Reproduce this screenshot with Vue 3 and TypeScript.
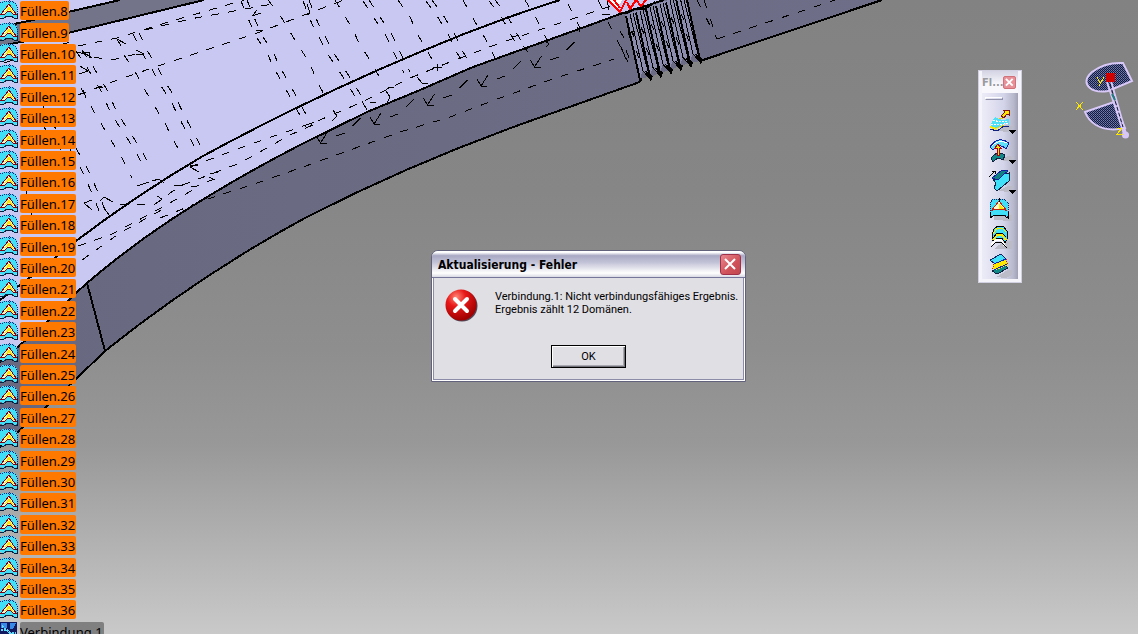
<script setup lang="ts">
import { ref } from 'vue'

const items = Array.from({ length: 29 }, (_, i) => `Füllen.${i + 8}`)
const dialogOpen = ref(true)
const toolbarOpen = ref(true)

// hidden edges that run down-right across the top face; pairs are drawn twice
const pairs = [
  'M82 50L94 68L107 90L115 108L123 122L133 137L143 153L152 170',
  'M139 33L148 52L158 68L167 85L177 100L185 117L195 135L204 153',
  'M247 0L256 22L263 37L272 50L280 67L290 85L300 103L312 126',
  'M309 0L318 23L327 40L335 55L345 70L355 85L366 105',
  'M369 0L382 20L392 35L400 52L410 72',
  'M432 0L445 18L455 35L462 50L472 67',
  'M495 0L507 15L515 30L526 50',
  'M76 148L88 170L98 192L107 215'
]
const singles = [
  'M81 88L93 110L102 125L112 142L122 158L132 178',
  'M124 55L137 75L145 90L155 107L165 123L173 140L184 158',
  'M268 0L280 15L290 32L300 48L309 62L318 83L328 102',
  'M335 0L352 28L360 45L370 60L381 80',
  'M398 0L410 17L418 35L428 52L438 70',
  'M463 0L475 22L485 38L496 60',
  'M525 0L537 20L548 42',
  'M568 4L581 30',
  'M704 0L717 39',
  'M697 0L717 39',
  'M608 22L628 62',
  'M4 63L76 40M20 95L76 170M42 104L62 140M26 190L34 226L76 250'
]
const shallow = [
  'M78 46L117 38L165 23L210 10L244 0',
  'M145 30L190 19L240 10L272 4',
  'M78 95L115 81L155 67L200 52L260 32L312 12L344 0',
  'M190 167L240 148L280 134L315 122L360 103L410 78L450 62L500 43L560 23L614 5',
  'M120 205L155 204L180 186L240 163L290 135L315 124',
  'M78 246L110 235L150 214L200 186',
  'M82 260L120 233L165 208',
  'M160 218L205 200L260 182L303 167L350 150L400 132L450 117L500 98L550 80L614 59',
  'M717 39L835 0',
  'M78 52L92 57L112 60L140 53',
  'M174 185L195 187L214 179'
]
const hooks = [0, 1, 2, 3, 4].map((n) => ({ x: 374 + (n - 1) * 53.5, y: 124 - (n - 1) * 19 }))
const threads = [0, 1, 2, 3, 4, 5, 6]
const tools = ['surface', 'offset', 'sweep', 'fill', 'loft', 'blend']
</script>

<template>
  <main class="viewport">
    <svg class="model" viewBox="0 0 1138 634" aria-hidden="true">
      <defs>
        <linearGradient id="face" x1="0" x2="1">
          <stop offset="0" stop-color="#686880" />
          <stop offset="1" stop-color="#6e6e88" />
        </linearGradient>
      </defs>
      <path
        fill="url(#face)"
        d="M0 362V447L20 430L45 408L76 379L105 351Q200 275 305 218Q412 163 530 121L620 89L637 83Q641 82 641 78L650 77L660 73L670 70L680 66L690 63L700 61L882 0H0Z"
      />
      <path
        fill="#c8c8f2"
        d="M0 0H664L620 14L590 25L540 43L473 67L420 90L367 112L300 145Q232 180 172 219Q128 248 87 283L76 293L47 322L20 345L0 362Z"
      />
      <path fill="#737389" d="M0 27L120 0H204L68 33L0 46Z" />
      <g class="edges">
        <path d="M0 27L33 20L68 12L120 0M0 46L68 33L204 0" />
        <path d="M0 300L40 270L76 241Q138 194 203 156Q310 98 420 52Q490 22 560 0" />
        <path d="M0 362L20 345L47 322L76 293L87 283Q128 248 172 219Q232 180 300 145L367 112L420 90L473 67L540 43L590 25L620 14L664 0" />
        <path d="M0 447L20 430L45 408L76 379L105 351Q200 275 305 218Q412 163 530 121L620 89L637 83Q641 82 641 78M700 61L882 0M87 283L105 351" />
      </g>
      <g class="hidden-edges steep">
        <template v-for="d in pairs" :key="d">
          <path :d="d" />
          <path :d="d" transform="translate(-6 1)" />
        </template>
        <path v-for="d in singles" :key="d" :d="d" />
      </g>
      <g class="hidden-edges">
        <path v-for="d in shallow" :key="d" :d="d" />
      </g>
      <g class="marks">
        <path
          v-for="h in hooks"
          :key="h.x"
          :d="`M${h.x - 4} ${h.y - 7}l4 7l7 -11m-7 11h6m10 -7l8 -3m8 -7l8 -8`"
        />
        <path d="M117 39l4 7m-4 -7l9 5M82 52l7 0l1 6m-7 -6l9 6M136 50l8 4l-8 1M80 66l8 5l-9 3M80 94l6 -2m-3 -2l3 8M96 87l7 0M253 15l4 -5m-5 6l9 -3M256 31l7 -1M307 15l3 -2l-3 -9" />
        <path d="M137 186l12 -4M152 181l7 -2l5 4M157 196l5 3l-5 4M84 203l8 -3m-8 3l8 7M100 201l4 -4l9 5M103 207l7 9M209 177l6 3m-5 -6l8 -2M190 167l9 5m-9 -6l8 -1" />
        <path d="M333 110l4 6l-5 5M307 125l7 -3M362 101l5 9m3 -8h6M386 90l4 -3h4m-8 4l4 6l-3 6M417 77l5 6h6M437 64v7m-4 -4h9M513 37l6 -2M523 46l5 6M544 40l5 4l-3 3M577 27l3 5M598 0l4 8m5 -8l2 10m-7 4h8" />
      </g>
      <g v-for="n in threads" :key="n" :transform="`translate(${n * 10} ${n * -3.4})`">
        <path v-if="n < 6" class="thread-face" d="M625 15l15 63l3 -7l8 8l-16 -68Z" />
        <path class="thread-line" d="M626 16l14 64" />
        <path v-if="n < 6" class="thread-fine" d="M630 14l13 57M633 13l17 66M643 71l7 8" />
        <path v-if="n < 6" d="M645 71L648 72L653 76L651 82Z" />
        <path v-if="n < 6" class="thread-mark" d="M631 31l3 6m2 14l3 7" />
      </g>
      <path class="marks" d="M620 31l4 7M628 31l2 7M632 31l4 7M621 47l5 12M626 50l3 8" />
      <path fill="#fff" d="M606 0H622L617 9Z" />
      <path class="red" d="M608 0L620 12L626 0M614 0L620 8M627 2L630 9L636 0L641 6L646 0M611 4L616 7" />
      <path class="edges" d="M618 14L627 13L634 9L645 9L655 2" />
    </svg>

    <ul class="tree">
      <li v-for="item in items" :key="item" class="node">
        <svg class="node-icon" viewBox="0 0 18 20" aria-hidden="true">
          <path fill="#40e0f8" d="M0 3L3 1H13L17 5V17L14 18L9 16L3 18L0 17Z" />
          <path fill="none" stroke="#102078" stroke-dasharray="1 1" d="M0 2H3L5 1H12L15 3L17 6V12M9 0V5" />
          <path fill="#fff8c8" stroke="#800010" d="M9 4L16 14H13Q9 9 5 14H1Z" />
          <path fill="#ffe800" d="M9 6L14 13L9 10L5 12Z" />
          <path fill="none" stroke="#002040" d="M0 18L4 18L7 16H11L14 18H17V13" />
        </svg>
        <span class="label">{{ item }}</span>
      </li>
      <li class="node">
        <svg class="node-icon" viewBox="0 0 18 20" aria-hidden="true">
          <path fill="#101860" d="M0 1H17V20H0Z" />
          <path fill="#3888e8" d="M1 2H7V7H1ZM10 2H16L13 8H10Z" />
          <path stroke="#60d8f8" stroke-width="2" stroke-dasharray="2 1" d="M1 9H8M9 12H16M2 5L14 15" />
          <path fill="#ffe800" d="M1 13H5V16H1Z" />
        </svg>
        <span class="label joined">Verbindung.1</span>
      </li>
    </ul>

    <svg class="compass" viewBox="0 0 73 100" role="img" aria-label="X Y Z">
      <defs>
        <pattern id="mesh" width="2" height="2" patternUnits="userSpaceOnUse">
          <rect width="2" height="2" fill="#101848" />
          <rect width="1" height="1" fill="#7880a8" />
          <rect x="1" y="1" width="1" height="1" fill="#606890" />
        </pattern>
      </defs>
      <g fill="url(#mesh)" stroke="#d8c8f8" stroke-width="2">
        <path d="M58 13Q40 12 27 22Q17 31 25 38Q31 43 43 41L67 31Z" />
        <path d="M20 62L49 52L60 78Q43 82 31 75Q23 70 20 62Z" />
      </g>
      <path fill="none" stroke="#d8c8f8" stroke-width="2" d="M42 32L59 84M46 31L61 84" />
      <path stroke="#101838" stroke-dasharray="4 2" d="M45 34L58 77" />
      <path stroke="#208080" stroke-width="2" d="M47 44L50 50" />
      <circle cx="60.500" cy="85" r="3.500" fill="#d8c8f8" />
      <path fill="#d00000" d="M41 23H50V32H41Z" />
      <path class="axes" d="M32 27L35 33M39 27L34 36M11 52L18 60M18 52L11 60M52 78H57L52 84H58" />
    </svg>

    <section v-if="toolbarOpen" class="toolbar" aria-label="Flächen">
      <header class="toolbar-title">
        <span>Fl...</span>
        <button class="toolbar-close" aria-label="Schließen" @click="toolbarOpen = false">
          <svg viewBox="0 0 11 11"><path d="M2 2L9 9M9 2L2 9" stroke="#fff" stroke-width="2" /></svg>
        </button>
      </header>
      <div class="toolbar-body">
        <i class="grip"></i>
        <button v-for="t in tools" :key="t" class="tool" :class="t" :aria-label="t">
          <svg viewBox="0 0 28 28">
            <g v-if="t === 'surface'">
              <path class="shade" d="M8 25L18 19L26 20L21 26Z" />
              <path fill="#50e0f8" d="M4 16L7 11L14 14L21 13V19L17 17L9 22L2 21Z" />
              <path fill="none" stroke="#fff" stroke-dasharray="2 1" d="M5 14L12 16L20 15M3 18L12 19L20 17" />
              <path fill="none" stroke="#ffe800" stroke-width="2" d="M2 21L9 23" />
              <path fill="none" stroke="#e8d800" d="M9 22L16 19M11 13L15 12L17 9" />
              <path fill="none" stroke="#102080" d="M2 23L9 25L16 20L21 20" />
              <path fill="#ffe800" stroke="#801010" d="M15 4H21V9L19 8L16 12L13 10L17 6Z" />
            </g>
            <g v-else-if="t === 'offset'">
              <path class="shade" d="M12 24L20 20L26 21L24 26Z" />
              <path fill="#60e0f8" stroke="#1020a0" d="M2 11Q10 -1 21 7L18 13Q11 6 5 14Z" />
              <path fill="none" stroke="#fff" d="M4 10Q11 3 19 7" />
              <path fill="#108888" stroke="#102040" d="M3 22Q9 14 17 19L15 24Q10 20 5 26Z" />
              <path fill="#ffe800" stroke="#b00010" d="M9 19V12H7L10 8L13 12H11V19Z" />
            </g>
            <g v-else-if="t === 'sweep'">
              <path class="shade" d="M10 25L20 20H26L22 26Z" />
              <path fill="#40e0f8" stroke="#102040" d="M5 13L10 14L15 8L21 7V15L9 25L6 22L8 17Z" />
              <path fill="#108080" stroke="#1020a0" d="M4 12L14 4L20 5L15 9L10 14Z" />
              <path fill="none" stroke="#000" d="M1 11L6 6M4 5H7V8" />
            </g>
            <g v-else-if="t === 'fill'">
              <path class="shade" d="M6 25V20H24V26Z" />
              <path fill="#40e0f8" stroke="#102060" stroke-dasharray="1 1" d="M2 8L5 4H16L20 8V22L15 20H7L2 22Z" />
              <path fill="#fff8d0" stroke="#c02010" d="M11 6L19 16L15 14H7L3 16Z" />
              <path fill="#ffe800" d="M11 8L16 14H11Z" />
              <path fill="none" stroke="#000" d="M2 17V23L7 20H15L20 23V17M11 3V7" />
            </g>
            <g v-else-if="t === 'loft'">
              <path class="shade" d="M6 26L16 18H24V26Z" />
              <path fill="#40e0f8" stroke="#000" d="M4 13L6 6L10 3H15L19 8L20 14L17 20L14 15H10L5 18Z" />
              <path fill="none" stroke="#ffe800" d="M5 11L9 5H14L18 9" />
              <path fill="none" stroke="#ffe800" stroke-width="2" d="M5 17L9 12H14L18 17" />
              <path fill="none" stroke="#fff" stroke-width="2" d="M3 22L8 17H13L17 23" />
              <path fill="none" stroke="#000" d="M3 24L8 19L14 20L19 25M5 15L9 10H14L18 14" />
            </g>
            <g v-else>
              <path class="shade" d="M8 26L20 19H24V24L18 27Z" />
              <path fill="#40e0f8" stroke="#102060" d="M2 9L13 3L18 8L7 13Z" />
              <path fill="#108888" stroke="#102040" d="M4 20L17 14L20 17L9 23Z" />
              <path fill="#ffe800" d="M6 13L18 8L20 14L8 19L4 18Z" />
              <path fill="none" stroke="#c02010" stroke-dasharray="1 1" d="M6 13L4 19M18 8L20 14" />
              <path fill="none" stroke="#1020c0" d="M6 13L18 8M6 19L19 13" />
            </g>
            <path v-if="t === 'surface' || t === 'offset' || t === 'sweep'" d="M21 24H28L24.500 28Z" />
          </svg>
        </button>
      </div>
    </section>

    <section v-if="dialogOpen" class="dialog" role="alertdialog" aria-labelledby="title" aria-describedby="message">
      <header class="titlebar">
        <h1 id="title">Aktualisierung - Fehler</h1>
        <button class="close" aria-label="Schließen" @click="dialogOpen = false">
          <svg viewBox="0 0 19 19"><path d="M4 4L14 14M14 4L4 14" stroke="#fff" stroke-width="2" /></svg>
        </button>
      </header>
      <div class="content">
        <svg class="error" viewBox="0 0 34 34" aria-hidden="true">
          <defs>
            <radialGradient id="ball" cx="0.350" cy="0.250" r="0.750">
              <stop offset="0" stop-color="#ff8878" />
              <stop offset="0.400" stop-color="#e81818" />
              <stop offset="1" stop-color="#a00000" />
            </radialGradient>
          </defs>
          <circle cx="17" cy="17" r="15.500" fill="#504858" />
          <circle cx="16" cy="16" r="15.500" fill="url(#ball)" />
          <path d="M10 10L22 22M22 10L10 22" stroke="#fff" stroke-width="4" stroke-linecap="round" />
        </svg>
        <p id="message">Verbindung.1: Nicht verbindungsfähiges Ergebnis.<br />Ergebnis zählt 12 Domänen.</p>
      </div>
      <button class="ok" @click="dialogOpen = false">OK</button>
    </section>
  </main>
</template>

<style>
body {
  margin: 0;
}
</style>

<style scoped>
.viewport {
  position: relative;
  height: 100vh;
  overflow: hidden;
  background: linear-gradient(#828282 0%, #868686 30%, #8e8e8e 55%, #989898 70%, #c9c9c9 100%);
  font-family: "Noto Sans", "DejaVu Sans Condensed", sans-serif;
  color: #000;
}
button {
  padding: 0;
  font-family: inherit;
  cursor: pointer;
}
svg {
  display: block;
}
.model {
  position: absolute;
  left: 0;
  top: 0;
  width: 100%;
  shape-rendering: crispEdges;
}
.edges {
  fill: none;
  stroke: #000;
  stroke-width: 2;
}
.hidden-edges {
  fill: none;
  stroke: #000;
  stroke-dasharray: 8 9;
}
.steep {
  stroke-dasharray: 8 12;
}
.marks {
  fill: none;
  stroke: #000;
}
.thread-face {
  fill: #8c8cae;
}
.thread-line {
  fill: none;
  stroke: #000;
  stroke-width: 2;
}
.thread-fine,
.thread-mark {
  fill: none;
  stroke: #000;
}
.red {
  fill: none;
  stroke: #f00;
  stroke-width: 2;
}
.tree {
  position: relative;
  margin: 0;
  padding: 0;
  list-style: none;
}
.node {
  display: flex;
  gap: 2px;
  height: 21px;
}
.node:nth-child(5n + 1),
.node:nth-child(5n + 4) {
  margin-bottom: 1px;
}
.node-icon {
  width: 18px;
  height: 20px;
  shape-rendering: crispEdges;
}
.label {
  height: 19px;
  margin-top: 1px;
  padding: 0 1px 0 0;
  border-radius: 2px;
  background: #ff7800;
  font-size: 13px;
  line-height: 20px;
  white-space: nowrap;
}
.joined {
  background: #808080;
}
.compass {
  position: absolute;
  right: 0;
  top: 50px;
  width: 73px;
  height: 100px;
}
.axes {
  fill: none;
  stroke: #ffe800;
  shape-rendering: crispEdges;
}
.toolbar {
  position: absolute;
  right: 116px;
  top: 70px;
  width: 44px;
  box-sizing: border-box;
  padding: 0 3px 3px;
  border: 1px solid #d0d0e0;
  background: #f4f4fa;
}
.toolbar-title {
  display: flex;
  align-items: center;
  justify-content: space-between;
  height: 22px;
  padding: 0 2px 0 0;
  background: linear-gradient(#d4d4e4, #f8f8fc 60%);
  color: #9a9aa0;
  font-family: "DejaVu Sans Condensed", sans-serif;
  font-size: 11px;
  font-weight: bold;
}
.toolbar-close {
  width: 13px;
  height: 13px;
  border: 1px solid #d07078;
  border-radius: 2px;
  background: #e89098;
}
.toolbar-body {
  display: flex;
  flex-direction: column;
  background: linear-gradient(90deg, #ececf8, #d4d4ea 60%, #b8b8cc 88%, #a0a0b4);
}
.grip {
  width: 16px;
  height: 1px;
  margin: 4px 0 5px 3px;
  border: 1px solid;
  border-color: #fff #9090a8 #9090a8 #fff;
}
.tool {
  width: 28px;
  height: 30px;
  margin-left: 6px;
  border: 0;
  background: none;
}
.tool svg {
  width: 28px;
  height: 28px;
  shape-rendering: crispEdges;
}
.fill,
.loft,
.blend {
  height: 28px;
}
.shade {
  fill: #bcbcc8;
}
.dialog {
  position: absolute;
  left: 431px;
  top: 250px;
  width: 315px;
  box-sizing: border-box;
  padding-bottom: 13px;
  border: 1px solid #62627c;
  border-radius: 7px 7px 0 0;
  background: #e0dfe4;
  box-shadow: inset 0 0 0 1px #fff, inset 0 0 0 2px #8c8ca8;
}
.titlebar {
  display: flex;
  align-items: center;
  justify-content: space-between;
  height: 26px;
  padding: 0 4px 0 6px;
  border-bottom: 1px solid #76769a;
  border-radius: 6px 6px 0 0;
  background: linear-gradient(#fff 0, #fff 5%, #a8a8c4 18%, #c4c4d8 45%, #fff 85%, #d8d8e4 100%);
}
.titlebar h1 {
  margin: 0;
  padding-top: 2px;
  font-family: "DejaVu Sans Condensed", sans-serif;
  font-size: 12px;
  line-height: 16px;
}
.close {
  width: 21px;
  height: 21px;
  border: 1px solid #a03048;
  border-radius: 3px;
  background: linear-gradient(135deg, #e88890, #d05058 60%, #c04850);
}
.content {
  display: flex;
  gap: 16px;
  padding: 11px 8px 0 13px;
}
.error {
  flex: none;
  width: 34px;
  height: 34px;
}
.content p {
  margin: 1px 0 0;
  font-family: Roboto, "Liberation Sans", sans-serif;
  font-size: 11px;
  line-height: 13px;
  white-space: nowrap;
}
.ok {
  display: block;
  width: 75px;
  height: 23px;
  margin: 22px auto 0 119px;
  border: 1px solid #000;
  background: #e0dfe4;
  box-shadow: inset 1px 1px #fff, inset -1px -1px #707078, inset -2px -2px #a8a8b0;
  font-family: Roboto, "Liberation Sans", sans-serif;
  font-size: 11px;
}
</style>
